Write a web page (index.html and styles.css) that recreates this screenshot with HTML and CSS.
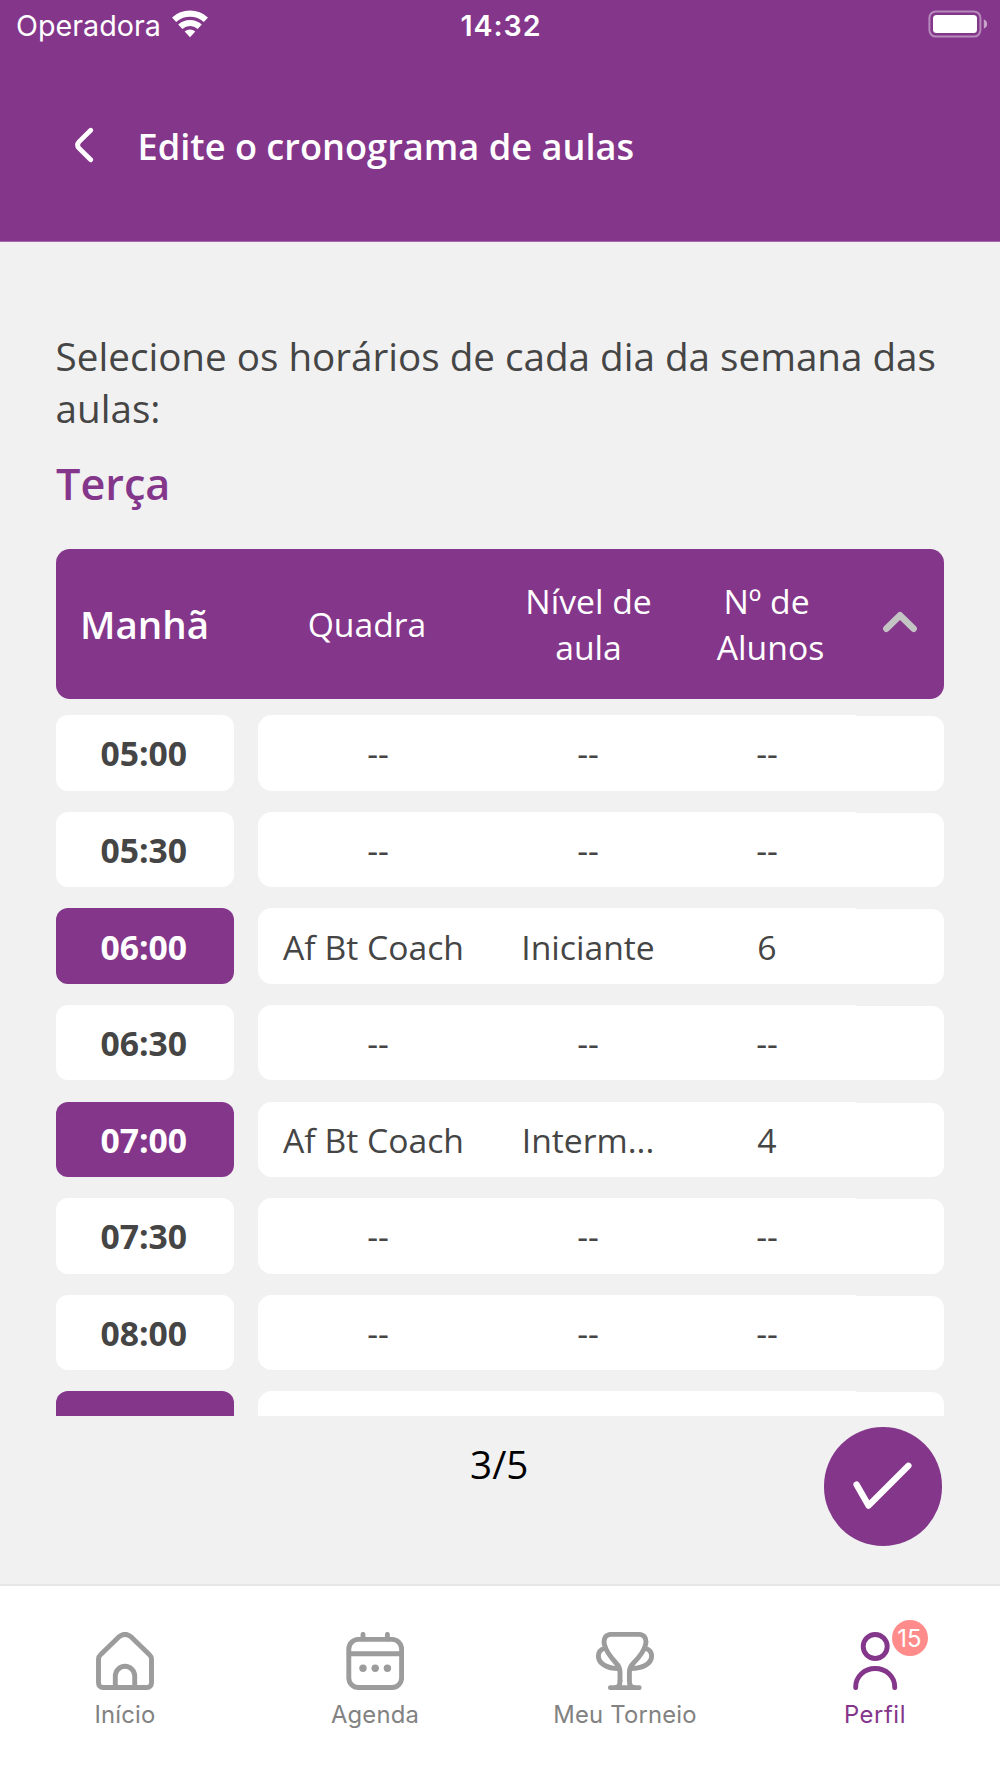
FILE: index.html
```html
<!DOCTYPE html>
<html lang="pt">
<head>
<meta charset="utf-8">
<title>Cronograma de aulas</title>
<link rel="stylesheet" href="styles.css">
</head>
<body>
<div class="app">
  <header class="topbar">
    <div class="status">
      <div class="carrier">
        <span>Operadora</span>
        <svg class="wifi" width="38" height="28" viewBox="0 0 38 28" fill="none" stroke="#fff" stroke-width="6.2">
          <path d="M3.1 9.8A23.8 23.8 0 0 1 34.9 9.8"/>
          <path d="M9.3 16.7A14.5 14.5 0 0 1 28.7 16.7"/>
          <path d="M19 27.3L13.7 21.5A8 8 0 0 1 24.3 21.5Z" fill="#fff" stroke="none"/>
        </svg>
      </div>
      <span class="clock">14:32</span>
      <div class="battery">
        <svg width="60" height="28" viewBox="0 0 60 28">
          <rect x="1.4" y="1.4" width="51" height="25.2" rx="6.5" fill="none" stroke="#fff" stroke-opacity=".42" stroke-width="2"/>
          <rect x="5" y="5" width="44" height="18" rx="3.5" fill="#fff"/>
          <path d="M55.8 9.2Q59.2 11 59.2 14T55.8 18.8Z" fill="#fff" fill-opacity=".55"/>
        </svg>
      </div>
    </div>
    <div class="titlebar">
      <svg class="back" width="20" height="36" viewBox="0 0 20 36" fill="none" stroke="#fff" stroke-width="4.8" stroke-linecap="round">
        <path d="M16.7 3.3L5.2 14.6Q2 18 5.2 21.4L16.7 32.7"/>
      </svg>
      <h1>Edite o cronograma de aulas</h1>
    </div>
  </header>

  <main class="content">
    <p class="lead">Selecione os horários de cada dia da semana das aulas:</p>
    <h2 class="day">Terça</h2>
    <div class="table-head">
      <span class="period">Manhã</span>
      <span class="col col-court">Quadra</span>
      <span class="col col-level">Nível de<br>aula</span>
      <span class="col col-count"><span>Nº de</span><span class="second">Alunos</span></span>
      <svg class="toggle" width="40" height="26" viewBox="0 0 40 26" fill="none" stroke="#c4c4c4" stroke-width="6.6" stroke-linecap="round" stroke-linejoin="round">
        <path d="M6.4 19.7L20 6.3L33.6 19.7"/>
      </svg>
    </div>
    <div class="slots">
      <div class="slot"><span class="time">05:00</span><div class="cells"><span>--</span><span>--</span><span>--</span><i></i></div></div>
      <div class="slot"><span class="time">05:30</span><div class="cells"><span>--</span><span>--</span><span>--</span><i></i></div></div>
      <div class="slot"><span class="time active">06:00</span><div class="cells"><span class="court">Af Bt Coach</span><span>Iniciante</span><span>6</span><i></i></div></div>
      <div class="slot"><span class="time">06:30</span><div class="cells"><span>--</span><span>--</span><span>--</span><i></i></div></div>
      <div class="slot"><span class="time active">07:00</span><div class="cells"><span class="court">Af Bt Coach</span><span>Interm...</span><span>4</span><i></i></div></div>
      <div class="slot"><span class="time">07:30</span><div class="cells"><span>--</span><span>--</span><span>--</span><i></i></div></div>
      <div class="slot"><span class="time">08:00</span><div class="cells"><span>--</span><span>--</span><span>--</span><i></i></div></div>
      <div class="slot"><span class="time active"></span><div class="cells"><span></span><span></span><span></span><i></i></div></div>
    </div>
  </main>

  <div class="pager">
    <span class="page">3/5</span>
    <div class="confirm">
      <svg width="62" height="50" viewBox="0 0 62 50" fill="none" stroke="#fff" stroke-width="6.3" stroke-linecap="round" stroke-linejoin="round">
        <path d="M4.6 22.6L16.6 43.6L56.4 3.8"/>
      </svg>
    </div>
  </div>

  <nav class="tabs">
    <div class="tab">
      <svg width="58" height="58" viewBox="0 0 58 58">
        <path d="M2.5 27Q2.5 24.5 4.5 22.7L22.5 5.2Q29 -0.5 35.5 5.2L53.5 22.7Q55.5 24.5 55.5 27V51a4.5 4.5 0 0 1-4.5 4.5H7a4.5 4.5 0 0 1-4.5-4.5Z"/>
        <path d="M19.3 55.5V44a9.7 9.7 0 0 1 19.4 0V55.5"/>
      </svg>
      <span>Início</span>
    </div>
    <div class="tab">
      <svg width="58" height="58" viewBox="0 0 58 58">
        <rect x="2.8" y="7.4" width="52.8" height="48.1" rx="9.5"/>
        <path d="M3 21.8H55.4M17 2.4V7M41.4 2.4V7"/>
        <g class="dots"><circle cx="17" cy="36.3" r="3.7"/><circle cx="29.2" cy="36.3" r="3.7"/><circle cx="41.4" cy="36.3" r="3.7"/></g>
      </svg>
      <span>Agenda</span>
    </div>
    <div class="tab">
      <svg width="58" height="58" viewBox="0 0 58 58">
        <path d="M24 49V40C24 36 23 34 20 31C14.5 25 9.8 18.5 8.4 12.5C7 6.5 10 2.4 15 2.4H43C48 2.4 51 6.5 49.6 12.5C48.2 18.5 43.5 25 37.5 31C34.5 34 33.4 36 33.4 40V49C33.4 53 35 55.5 38 55.5"/>
        <path d="M24 49C24 53 22.4 55.5 19.5 55.5M14.4 55.6H43.2"/>
        <path d="M9 16.3C4.5 17 2.4 20.5 2.4 24C2.4 31.5 11 36.6 23 36.6M49 16.3C53.5 17 55.6 20.5 55.6 24C55.6 31.5 47 36.6 34.5 36.6"/>
      </svg>
      <span>Meu Torneio</span>
    </div>
    <div class="tab selected">
      <div class="icon-wrap">
        <svg width="58" height="58" viewBox="0 0 58 58">
          <circle cx="29.2" cy="14.5" r="12"/>
          <path d="M9.7 55.6V55C9.7 44.5 18.5 36.5 29.2 36.5S48.7 44.5 48.7 55V55.6"/>
        </svg>
        <b class="badge">15</b>
      </div>
      <span class="label-profile">Perfil</span>
    </div>
  </nav>
</div>
</body>
</html>
```
FILE: styles.css
```css
* { box-sizing: border-box; }
body {
  margin: 0;
  background: #f1f1f1;
  color: #454545;
  font-family: "Open Sans", "Noto Sans", sans-serif;
}
h1, h2, p { margin: 0; }
svg { display: block; flex: none; }

.app {
  width: 1000px;
  height: 1778px;
  display: flex;
  flex-direction: column;
  overflow: hidden;
}

/* Purple header */
.topbar {
  height: 242px;
  flex: none;
  display: flex;
  flex-direction: column;
  border-bottom: 1px solid #a767ad;
  background: #84368b;
  color: #fff;
}
.status {
  height: 51px;
  padding: 0 12px 0 16px;
  display: grid;
  grid-template-columns: 1fr auto 1fr;
  align-items: center;
  font: 400 28.7px/36px Inter, sans-serif;
}
.status .carrier { display: flex; align-items: center; gap: 10.3px; }
.wifi { margin-bottom: 4px; }
.clock {
  margin-left: -2px;
  font-size: 28.6px;
  font-weight: 600;
  letter-spacing: .9px;
}
.battery { justify-self: end; margin-bottom: 3px; }
.titlebar {
  flex: 1;
  display: flex;
  align-items: center;
  gap: 43.5px;
  padding: 0 0 1px 74px;
}
.back { margin-bottom: 1px; }
h1 { font-size: 36.2px; line-height: 48px; font-weight: 600; white-space: nowrap; }

/* Schedule */
.content {
  height: 1173.6px;
  flex: none;
  padding: 87.9px 56px 0 56px;
  display: flex;
  flex-direction: column;
  overflow: hidden;
}
.lead { font-size: 38.62px; line-height: 52.4px; margin: 0 -10px 0 -0.4px; }
.day {
  margin-top: 20.2px;
  color: #84368b;
  font-size: 43.2px;
  line-height: 58.8px;
  font-weight: 600;
}
.table-head {
  flex: none;
  height: 150.2px;
  margin-top: 35.1px;
  padding: 1px 0 0 24px;
  display: grid;
  grid-template-columns: 167px 240px 203px 155px 1fr;
  align-items: center;
  border-radius: 14px;
  background: #84368b;
  color: #fff;
}
.period { font-size: 38.5px; line-height: 52.7px; font-weight: 600; }
.col { font-size: 33.7px; line-height: 46.5px; text-align: center; }
.col-count { display: flex; flex-direction: column; }
.col-count > span:first-child { padding-right: 2px; }
.col-count .second { padding-left: 6px; }
.toggle { margin-left: 35px; margin-bottom: 4px; }

.slots {
  padding-top: 16.2px;
  display: flex;
  flex-direction: column;
  gap: 21.1px;
}
.slot {
  flex: none;
  height: 75.5px;
  display: grid;
  grid-template-columns: 177.6px 686px;
  gap: 24.4px;
  font-size: 33.7px;
  line-height: 46px;
}
.time {
  display: flex;
  align-items: center;
  justify-content: center;
  padding: 1px 2px 0 0;
  border-radius: 12px;
  background: #fff;
  font-weight: 700;
}
.time.active { background: #84368b; color: #fff; }
.cells { display: grid; grid-template-columns: 240px 180px 178px 88px; }
.cells span {
  display: flex;
  align-items: center;
  justify-content: center;
  padding-top: 1px;
  background: #fff;
}
.cells span:first-child { border-radius: 14px 0 0 14px; }
.cells i { margin-top: 1px; background: #fff; border-radius: 0 12px 12px 0; }
.cells .court { padding-right: 9px; }

/* Step counter and confirm button */
.pager {
  flex: 1;
  display: grid;
  grid-template-columns: 1fr auto 1fr;
  align-items: start;
  color: #000;
}
.page { grid-column: 2; padding: 22.2px 1.5px 0 0; font-size: 38.65px; line-height: 52.6px; }
.confirm {
  width: 118.5px;
  height: 118.5px;
  margin: 11.7px 58px 0 0;
  justify-self: end;
  display: flex;
  align-items: center;
  justify-content: center;
  border-radius: 50%;
  background: #84368b;
}
.confirm svg { margin: 0 0 0 1px; }

/* Bottom tabs */
.tabs {
  flex: none;
  height: 194px;
  padding-top: 46px;
  display: grid;
  grid-template-columns: repeat(4, 1fr);
  border-top: 2px solid #e6e6e6;
  background: #fff;
}
.tab {
  display: flex;
  flex-direction: column;
  align-items: center;
  gap: 10.4px;
  color: #828282;
  font: 400 23.8px/29px Inter, sans-serif;
  letter-spacing: .2px;
}
.tab svg { fill: none; stroke: #9c9c9c; stroke-width: 4.9; stroke-linecap: round; stroke-linejoin: round; }
.tab .dots { fill: #9c9c9c; stroke: none; }
.tab.selected { color: #84368b; }
.tab.selected svg { stroke: #84368b; }
.label-profile { letter-spacing: .6px; }
.icon-wrap { position: relative; }
.badge {
  position: absolute;
  left: 46px;
  top: -12px;
  width: 36px;
  height: 36px;
  padding-right: 1px;
  border-radius: 50%;
  background: #ff8b8b;
  color: #fff;
  font-weight: 400;
  line-height: 37px;
  text-align: center;
}
```
